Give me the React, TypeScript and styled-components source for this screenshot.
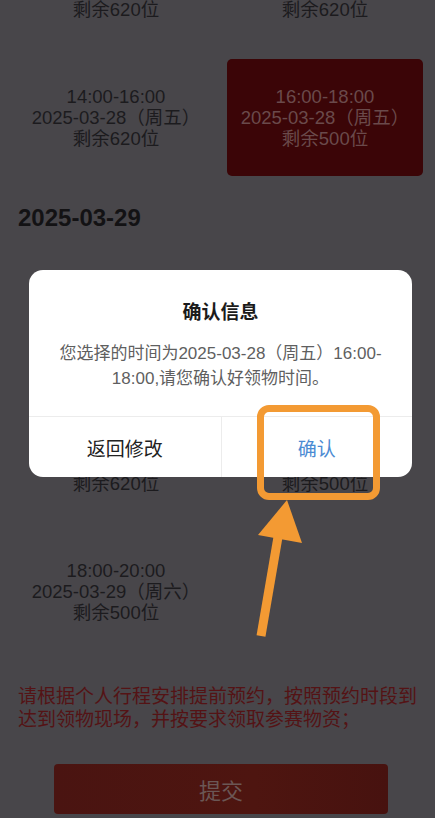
import React from 'react';
import styled, { createGlobalStyle } from 'styled-components';

const GlobalStyle = createGlobalStyle`
  html, body {
    margin: 0;
    padding: 0;
    background: #48464a;
    overflow: hidden;
  }
  body {
    font-family: "Liberation Sans", "Noto Sans CJK SC", sans-serif;
  }
`;

const Page = styled.div`
  height: 818px;
  overflow: hidden;
  position: relative;
`;

const Content = styled.div`
  margin-top: -70px;
  padding: 0 15px 0 18px;
`;

const SlotGrid = styled.div`
  display: grid;
  grid-template-columns: 196px 196px;
  column-gap: 13px;
  row-gap: 12px;
`;

const Slot = styled.div<{ $selected?: boolean }>`
  height: 117px;
  display: flex;
  flex-direction: column;
  align-items: center;
  justify-content: center;
  border-radius: 5px;
  background: ${(p) => (p.$selected ? '#3b0507' : 'transparent')};
  color: ${(p) => (p.$selected ? '#6a4a4b' : '#1c1b1e')};
  font-size: 18.5px;
  line-height: 21px;
  white-space: nowrap;
`;

const DateHeading = styled.div`
  margin: 27px 0 42px;
  font-size: 24px;
  line-height: 30px;
  font-weight: bold;
  color: #131214;
`;

const Notice = styled.p`
  margin: 35px 0 0;
  font-size: 19px;
  line-height: 23px;
  color: #541315;
`;

const SubmitButton = styled.button`
  display: block;
  margin: 33px 0 0 36px;
  width: 334px;
  height: 50px;
  border: none;
  border-radius: 4px;
  background: linear-gradient(90deg, #4a1411, #4e1510 60%, #47120f);
  color: #6b5755;
  font-family: inherit;
  font-size: 22px;
`;

const Modal = styled.div`
  position: absolute;
  left: 29px;
  top: 270px;
  width: 383px;
  background: #fff;
  border-radius: 14px;
  overflow: hidden;
`;

const ModalTitle = styled.div`
  padding-top: 30px;
  text-align: center;
  font-size: 19px;
  line-height: 26px;
  font-weight: bold;
  color: #1b1b1b;
`;

const ModalBody = styled.div`
  margin-top: 15px;
  padding: 0 10px 25px;
  text-align: center;
  font-size: 17px;
  line-height: 25px;
  color: #5f5f5f;
  white-space: pre-line;
`;

const ModalActions = styled.div`
  display: grid;
  grid-template-columns: 1fr 1fr;
  border-top: 1px solid #ececec;
`;

const ModalAction = styled.div<{ $primary?: boolean }>`
  height: 60px;
  display: flex;
  align-items: center;
  justify-content: center;
  font-size: 19px;
  color: ${(p) => (p.$primary ? '#4b8bd3' : '#222')};
  & + & {
    border-left: 1px solid #ececec;
  }
`;

const Highlight = styled.div`
  position: absolute;
  left: 257px;
  top: 405px;
  width: 123px;
  height: 95px;
  box-sizing: border-box;
  border: 7px solid #f39a33;
  border-radius: 12px;
`;

const Arrow = styled.svg`
  position: absolute;
  left: 250px;
  top: 495px;
`;

type SlotData = { time: string; date: string; left: string; selected?: boolean };

const day28: SlotData[] = [
  { time: '10:00-12:00', date: '2025-03-28（周五）', left: '剩余620位' },
  { time: '12:00-14:00', date: '2025-03-28（周五）', left: '剩余620位' },
  { time: '14:00-16:00', date: '2025-03-28（周五）', left: '剩余620位' },
  { time: '16:00-18:00', date: '2025-03-28（周五）', left: '剩余500位', selected: true },
];

const day29: SlotData[] = [
  { time: '10:00-12:00', date: '2025-03-29（周六）', left: '剩余620位' },
  { time: '12:00-14:00', date: '2025-03-29（周六）', left: '剩余620位' },
  { time: '14:00-16:00', date: '2025-03-29（周六）', left: '剩余620位' },
  { time: '16:00-18:00', date: '2025-03-29（周六）', left: '剩余500位' },
  { time: '18:00-20:00', date: '2025-03-29（周六）', left: '剩余500位' },
];

function Slots({ items }: { items: SlotData[] }) {
  return (
    <SlotGrid>
      {items.map((s, i) => (
        <Slot key={i} $selected={s.selected}>
          <span>{s.time}</span>
          <span>{s.date}</span>
          <span>{s.left}</span>
        </Slot>
      ))}
    </SlotGrid>
  );
}

export default function App() {
  return (
    <Page>
      <GlobalStyle />
      <Content>
        <Slots items={day28} />
        <DateHeading>2025-03-29</DateHeading>
        <Slots items={day29} />
        <Notice>请根据个人行程安排提前预约，按照预约时段到达到领物现场，并按要求领取参赛物资；</Notice>
        <SubmitButton>提交</SubmitButton>
      </Content>

      <Modal>
        <ModalTitle>确认信息</ModalTitle>
        <ModalBody>{'您选择的时间为2025-03-28（周五）16:00-\n18:00,请您确认好领物时间。'}</ModalBody>
        <ModalActions>
          <ModalAction>返回修改</ModalAction>
          <ModalAction $primary>确认</ModalAction>
        </ModalActions>
      </Modal>

      <Highlight />
      <Arrow width="60" height="150" viewBox="0 0 60 150">
        <polygon points="37,5 8,40 52,48" fill="#f39a33" />
        <line x1="28" y1="42" x2="11" y2="141" stroke="#f39a33" strokeWidth="9" />
      </Arrow>
    </Page>
  );
}
